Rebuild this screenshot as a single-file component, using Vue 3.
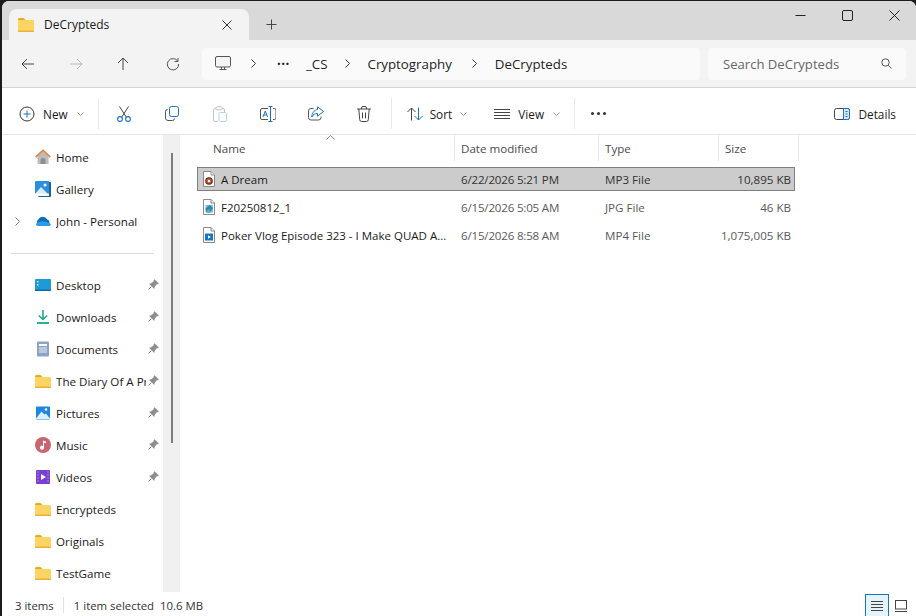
<script setup>
const navTop = [
  { label: 'Home', icon: 'home' },
  { label: 'Gallery', icon: 'gallery' },
  { label: 'John - Personal', icon: 'cloud', expand: true }
]

const navPinned = [
  { label: 'Desktop', icon: 'desktop', pin: true },
  { label: 'Downloads', icon: 'downloads', pin: true },
  { label: 'Documents', icon: 'documents', pin: true },
  { label: 'The Diary Of A Programmer', icon: 'folder', pin: true },
  { label: 'Pictures', icon: 'pictures', pin: true },
  { label: 'Music', icon: 'music', pin: true },
  { label: 'Videos', icon: 'videos', pin: true },
  { label: 'Encrypteds', icon: 'folder' },
  { label: 'Originals', icon: 'folder' },
  { label: 'TestGame', icon: 'folder' }
]

const files = [
  { name: 'A Dream', date: '6/22/2026 5:21 PM', type: 'MP3 File', size: '10,895 KB', kind: 'mp3', selected: true },
  { name: 'F20250812_1', date: '6/15/2026 5:05 AM', type: 'JPG File', size: '46 KB', kind: 'jpg' },
  { name: 'Poker Vlog Episode 323 - I Make QUAD A...', date: '6/15/2026 8:58 AM', type: 'MP4 File', size: '1,075,005 KB', kind: 'mp4' }
]
</script>

<template>
  <div class="window">
    <!-- tab strip -->
    <div class="titlebar">
      <div class="tab">
        <svg class="tab-folder" width="18" height="16" viewBox="0 0 18 16">
          <path d="M1 2.500C1 1.700 1.600 1 2.500 1h4L8.500 3H1z" fill="#e8a820" />
          <rect x="1" y="3" width="16" height="12" rx="1.200" fill="#fcd462" />
          <rect x="1" y="13.500" width="16" height="1.500" rx=".7" fill="#e9b13a" />
        </svg>
        <span class="tab-title">DeCrypteds</span>
        <svg class="tab-close" width="10" height="10" viewBox="0 0 10 10">
          <path d="M.5.5l9 9M9.500.5l-9 9" stroke="#333" stroke-width="1" fill="none" />
        </svg>
      </div>
      <svg class="tab-plus" width="11" height="11" viewBox="0 0 11 11">
        <path d="M5.500 .5v10M.5 5.500h10" stroke="#444" stroke-width="1" fill="none" />
      </svg>
      <div class="win-controls">
        <svg width="11" height="11" viewBox="0 0 11 11"><path d="M.5 5.500h10" stroke="#222" stroke-width="1" /></svg>
        <svg width="11" height="11" viewBox="0 0 11 11"><rect x=".5" y=".5" width="10" height="10" rx="1.500" fill="none" stroke="#222" /></svg>
        <svg width="11" height="11" viewBox="0 0 11 11"><path d="M.5.5l10 10M10.500.5l-10 10" stroke="#222" fill="none" /></svg>
      </div>
    </div>

    <!-- address row -->
    <div class="addressbar">
      <div class="nav-buttons">
        <svg width="14" height="12" viewBox="0 0 14 12"><path d="M13 6H1M6 1L1 6l5 5" stroke="#444" fill="none" /></svg>
        <svg width="14" height="12" viewBox="0 0 14 12"><path d="M1 6h12M8 1l5 5-5 5" stroke="#b8b8b8" fill="none" /></svg>
        <svg width="12" height="14" viewBox="0 0 12 14"><path d="M6 13V1M1 6l5-5 5 5" stroke="#444" fill="none" /></svg>
        <svg class="refresh" width="14" height="14" viewBox="0 0 14 14"><path d="M11.800 4.200A5.700 5.700 0 1 0 12.700 7M12 1v3.500H8.500" stroke="#555" fill="none" /></svg>
      </div>
      <div class="breadcrumb">
        <svg class="pc" width="16" height="15" viewBox="0 0 16 15">
          <rect x=".5" y=".5" width="15" height="10.500" rx="1.500" fill="#f4f4f4" stroke="#555" />
          <path d="M4.500 13.500h7M6.500 11v2.500M9.500 11v2.500" stroke="#555" fill="none" />
        </svg>
        <svg class="crumb-chev" width="5" height="9" viewBox="0 0 5 9"><path d="M.5.5l4 4-4 4" stroke="#333" fill="none" /></svg>
        <span class="dots">···</span>
        <span class="crumb cs">_CS</span>
        <svg class="crumb-chev" width="5" height="9" viewBox="0 0 5 9"><path d="M.5.5l4 4-4 4" stroke="#333" fill="none" /></svg>
        <span class="crumb">Cryptography</span>
        <svg class="crumb-chev" width="5" height="9" viewBox="0 0 5 9"><path d="M.5.5l4 4-4 4" stroke="#333" fill="none" /></svg>
        <span class="crumb">DeCrypteds</span>
      </div>
      <div class="search">
        <span>Search DeCrypteds</span>
        <svg width="11" height="11" viewBox="0 0 11 11"><circle cx="4.500" cy="4.500" r="3.700" fill="none" stroke="#555" /><path d="M7.300 7.300l3.200 3.200" stroke="#555" /></svg>
      </div>
    </div>

    <!-- command bar -->
    <div class="toolbar">
      <div class="tool-text new">
        <svg width="16" height="16" viewBox="0 0 16 16"><circle cx="8" cy="8" r="7" fill="none" stroke="#333" /><path d="M8 4.500v7M4.500 8h7" stroke="#1a73c2" fill="none" /></svg>
        <span>New</span>
        <svg class="caret" width="7" height="4" viewBox="0 0 7 4"><path d="M.5.5l3 3 3-3" stroke="#999" fill="none" /></svg>
      </div>
      <i class="tool-sep"></i>
      <div class="tool-icons">
        <svg width="14" height="16" viewBox="0 0 14 16"><path d="M2.500 .5l6.700 10.500M11.500 .5L4.800 11" stroke="#444" fill="none" /><circle cx="3" cy="13" r="2.400" fill="none" stroke="#1a73c2" stroke-width="1.100" /><circle cx="11" cy="13" r="2.400" fill="none" stroke="#1a73c2" stroke-width="1.100" /></svg>
        <svg width="14" height="15" viewBox="0 0 14 15"><rect x="4.500" y=".5" width="9" height="10" rx="2" fill="none" stroke="#1a73c2" /><path d="M2.500 3.500A2 2 0 0 0 .5 5.500v6.500A2.500 2.500 0 0 0 3 14.500h4.500a2 2 0 0 0 2-2" stroke="#555" fill="none" /></svg>
        <svg width="14" height="16" viewBox="0 0 14 16"><path d="M3 2.500H2A1.500 1.500 0 0 0 .5 4v10A1.500 1.500 0 0 0 2 15.500h3" stroke="#c4c4c4" fill="none" /><rect x="3" y=".8" width="6" height="3" rx="1" fill="none" stroke="#c4c4c4" /><path d="M9 2.500h1A1.500 1.500 0 0 1 11.500 4v2" stroke="#c4c4c4" fill="none" /><rect x="6" y="6.500" width="7.500" height="9" rx="1.200" fill="none" stroke="#b5d3ec" /></svg>
        <svg width="16" height="16" viewBox="0 0 16 16"><path d="M8 2.500H2A1.500 1.500 0 0 0 .5 4v8A1.500 1.500 0 0 0 2 13.500h6M13 2.500h1.500A1.500 1.500 0 0 1 16 4v8a1.500 1.500 0 0 1-1.500 1.500H13" stroke="#555" fill="none" /><path d="M8.500 .5h4M10.500 .5v15M8.500 15.500h4" stroke="#1a73c2" fill="none" /><path d="M3 11l2.300-6 2.300 6M3.800 9h3" stroke="#1a73c2" fill="none" /></svg>
        <svg width="16" height="15" viewBox="0 0 16 15"><path d="M5.500 2.500H3A2.500 2.500 0 0 0 .5 5v6.500A2.500 2.500 0 0 0 3 14h7.500a2.500 2.500 0 0 0 2.500-2.500v-1" stroke="#555" fill="none" /><path d="M9.500.8l6 4.700-6 4.700V7.500C7 7.500 5 8.500 3.800 11 3.800 7.500 6 4 9.500 3.500z" stroke="#1a73c2" fill="none" stroke-linejoin="round" /></svg>
        <svg width="14" height="16" viewBox="0 0 14 16"><path d="M0 3h14M4.500 3V2a1.500 1.500 0 0 1 1.500-1.500h2A1.500 1.500 0 0 1 9.500 2v1M1.800 3l.9 10.500a2 2 0 0 0 2 2h4.600a2 2 0 0 0 2-2L12.200 3M5.500 6.500v6M8.500 6.500v6" stroke="#444" fill="none" /></svg>
      </div>
      <i class="tool-sep sep2"></i>
      <div class="tool-text sort">
        <svg width="16" height="14" viewBox="0 0 16 14"><path d="M4.500 13.500V1M.5 5l4-4 4 4" stroke="#444" fill="none" /><path d="M11.500 .5V13M7.500 9l4 4 4-4" stroke="#1a73c2" fill="none" /></svg>
        <span>Sort</span>
        <svg class="caret" width="7" height="4" viewBox="0 0 7 4"><path d="M.5.5l3 3 3-3" stroke="#999" fill="none" /></svg>
      </div>
      <div class="tool-text view">
        <svg width="16" height="10" viewBox="0 0 16 10"><path d="M0 .5h16M0 3.500h16M0 6.500h16M0 9.500h16" stroke="#444" fill="none" /></svg>
        <span>View</span>
        <svg class="caret" width="7" height="4" viewBox="0 0 7 4"><path d="M.5.5l3 3 3-3" stroke="#999" fill="none" /></svg>
      </div>
      <i class="tool-sep"></i>
      <div class="more"><b></b><b></b><b></b></div>
      <div class="tool-text details">
        <svg width="16" height="12" viewBox="0 0 16 12"><rect x=".5" y=".5" width="15" height="11" rx="2" fill="none" stroke="#444" /><path d="M9.500 .5h4a2 2 0 0 1 2 2v7a2 2 0 0 1-2 2h-4z" fill="#d6e8f7" stroke="#1a73c2" /><path d="M11.500 3.500h2M11.500 6h2M11.500 8.500h2" stroke="#1a73c2" /></svg>
        <span>Details</span>
      </div>
    </div>

    <div class="main">
      <aside class="sidebar">
        <div class="nav-list">
          <div v-for="item in navTop" :key="item.label" class="nav-item">
            <svg v-if="item.expand" class="nav-chev" width="5" height="9" viewBox="0 0 5 9"><path d="M.5.5l4 4-4 4" stroke="#777" fill="none" /></svg>
            <svg class="nav-icon" width="16" height="16" viewBox="0 0 16 16">
              <template v-if="item.icon === 'home'">
                <path d="M2.500 7.500L8 2.500l5.500 5V15h-11z" fill="#bdbdbd" />
                <path d="M5.500 15v-3.500a2.500 2.500 0 0 1 5 0V15z" fill="#8f8f8f" />
                <path d="M.7 8.200L8 1.300l7.300 6.900" stroke="#dc8540" stroke-width="1.700" fill="none" />
              </template>
              <template v-else-if="item.icon === 'gallery'">
                <rect x="3" y="1" width="13" height="15" rx="1" fill="#1b5f9e" />
                <rect x="0" y="0" width="14" height="15" rx="1" fill="#2b8fe0" />
                <circle cx="10" cy="4" r="1.500" fill="#fff" />
                <path d="M0 13L6 6l7 7z" fill="#d9ecfb" />
                <rect x="0" y="12.500" width="14" height="2.500" fill="#fff" />
              </template>
              <template v-else>
                <path d="M4 12A3.200 3.200 0 0 1 3.200 6.500 5 5 0 0 1 12.200 6.500 3 3 0 0 1 13 12z" fill="#0f6cbd" />
                <path d="M1 11c3-3.500 9-4 14.800 0 .2 1.300-.8 2-1.800 2H3c-1.200 0-2-.8-2-2z" fill="#2d9ae6" />
              </template>
            </svg>
            <span class="nav-label">{{ item.label }}</span>
          </div>
          <div class="nav-divider"><i></i></div>
          <div v-for="item in navPinned" :key="item.label" class="nav-item">
            <svg class="nav-icon" width="16" height="16" viewBox="0 0 16 16">
              <template v-if="item.icon === 'folder'">
                <path d="M0 3.500C0 2.700.6 2 1.500 2h4L7.500 4H0z" fill="#e8a820" />
                <rect x="0" y="4" width="16" height="11" rx="1" fill="#fcd462" />
                <rect x="0" y="13.500" width="16" height="1.500" rx=".7" fill="#e9b13a" />
              </template>
              <template v-else-if="item.icon === 'desktop'">
                <rect x="0" y="2" width="16" height="12" rx="1" fill="#1e9ad6" />
                <rect x="0" y="12.500" width="16" height="1.500" fill="#0f6cad" />
                <rect x="2" y="4" width="1.500" height="1.500" fill="#cdeffc" />
                <rect x="2" y="7" width="1.500" height="1.500" fill="#cdeffc" />
              </template>
              <template v-else-if="item.icon === 'downloads'">
                <path d="M8 1v9M3.800 6.500L8 10.500l4.200-4" stroke="#17a589" stroke-width="1.500" fill="none" />
                <path d="M2 14h12" stroke="#17a589" stroke-width="1.800" />
              </template>
              <template v-else-if="item.icon === 'documents'">
                <rect x="2" y="0.500" width="12" height="15" rx="1" fill="#8ba3c4" />
                <rect x="4" y="3" width="8" height="2" fill="#fff" />
                <path d="M4 7h8M4 9h8M4 11h8" stroke="#e6edf6" />
              </template>
              <template v-else-if="item.icon === 'pictures'">
                <rect x="1" y="1.500" width="14" height="13" rx="1" fill="#1c86e0" />
                <circle cx="11" cy="4.500" r="1.300" fill="#fff" />
                <path d="M1 13.500L6.500 6.500l3 3 1.500-1 4 5v.5H1z" fill="#dff0fc" />
              </template>
              <template v-else-if="item.icon === 'music'">
                <circle cx="8" cy="8" r="8" fill="#c9656f" />
                <path d="M8 3.500l3 1v1.800l-2-.6v5a2 2 0 1 1-1-1.700z" fill="#fff" />
              </template>
              <template v-else>
                <rect x="1" y="1" width="14" height="14" rx="1" fill="#7a3fd0" />
                <path d="M6 5l5 3-5 3z" fill="#fff" />
                <path d="M2.500 3h1M2.500 6h1M2.500 9h1M2.500 12h1M12.500 3h1M12.500 6h1M12.500 9h1M12.500 12h1" stroke="#d9c6f5" />
              </template>
            </svg>
            <span class="nav-label">{{ item.label }}</span>
            <svg v-if="item.pin" class="pin" width="11" height="11" viewBox="0 0 11 11">
              <path d="M6.500 .2l4.300 4.300-1 .8-1 0L6.700 7.700 6.300 10 1 4.700l2.300-.4 2.400-2.100 0-1z" fill="#8c8c8c" />
              <path d="M3.200 7.800L.5 10.500" stroke="#8c8c8c" />
            </svg>
          </div>
        </div>
        <div class="side-scroll"><i></i></div>
      </aside>

      <section class="content">
        <div class="list-head">
          <div class="col-name">Name<svg class="sort-arrow" width="9" height="5" viewBox="0 0 9 5"><path d="M.5 4.500l4-4 4 4" stroke="#888" fill="none" /></svg></div>
          <div class="col-date">Date modified</div>
          <div class="col-type">Type</div>
          <div class="col-size">Size</div>
        </div>
        <div class="rows">
          <div v-for="file in files" :key="file.name" :class="['row', { 'is-selected': file.selected }]">
            <div class="cell-name">
              <svg width="12" height="16" viewBox="0 0 12 16">
                <path d="M.5.5h7.500l3.500 3.500v11.500H.5z" fill="#fff" stroke="#8a8a8a" />
                <path d="M8 .5V4h3.500" fill="#eee" stroke="#8a8a8a" />
                <template v-if="file.kind === 'mp3'">
                  <circle cx="6" cy="10" r="3.800" fill="#4a2418" />
                  <circle cx="6" cy="10" r="2.800" fill="#c2542a" />
                  <circle cx="6" cy="10" r="1.300" fill="#fff" />
                </template>
                <template v-else-if="file.kind === 'jpg'">
                  <rect x="2.500" y="6" width="7.500" height="7.500" fill="#7cc0e6" />
                  <path d="M2.500 9.500l4-3.500 3.500 3-3 4.500H3.500z" fill="#2f86b4" />
                  <path d="M3.500 12l2.500-2 2 3.500h-4z" fill="#5fb79a" />
                </template>
                <template v-else>
                  <rect x="2" y="6.500" width="8" height="7" rx=".5" fill="#1577c2" />
                  <path d="M5 8.200l2.800 1.800L5 11.800z" fill="#fff" />
                </template>
              </svg>
              <span>{{ file.name }}</span>
            </div>
            <div class="cell-date">{{ file.date }}</div>
            <div class="cell-type">{{ file.type }}</div>
            <div class="cell-size">{{ file.size }}</div>
          </div>
        </div>
      </section>
    </div>

    <!-- status bar -->
    <div class="statusbar">
      <span class="count">3 items</span>
      <i></i>
      <span class="sel">1 item selected</span>
      <span class="mb">10.6 MB</span>
      <div class="view-switch">
        <div class="vs-btn active">
          <svg width="12" height="10" viewBox="0 0 12 10"><path d="M0 .5h12M0 3.500h12M0 6.500h12M0 9.500h12" stroke="#444" fill="none" /></svg>
        </div>
        <div class="vs-btn">
          <svg width="12" height="12" viewBox="0 0 12 12"><rect x=".5" y=".5" width="11" height="8.500" fill="none" stroke="#444" /><path d="M0 11.500h12" stroke="#444" /></svg>
        </div>
      </div>
    </div>
  </div>
</template>

<style>
html, body {
  margin: 0;
  background: #1c1c1c;
}
</style>

<style scoped>
.window {
  width: 914px;
  height: 615px;
  margin: 1px 0 0 2px;
  display: flex;
  flex-direction: column;
  overflow: hidden;
  background: #fff;
  border-radius: 7px 7px 0 0;
  font-family: "Open Sans", "Noto Sans", sans-serif;
  font-size: 11.600px;
  color: #1a1a1a;
}

/* ---- tabs ---- */
.titlebar {
  height: 39px;
  flex: none;
  display: flex;
  align-items: flex-start;
  background: #d9d9d9;
}
.tab {
  width: 240px;
  height: 31px;
  margin: 8px 0 0 7px;
  display: flex;
  align-items: center;
  padding: 0 0 0 8px;
  box-sizing: border-box;
  background: #f3f3f3;
  border-radius: 8px 8px 0 0;
}
.tab-title {
  margin-left: 9px;
  font-size: 12px;
  font-weight: 500;
}
.tab-close {
  margin-left: auto;
  margin-right: 17px;
}
.tab-plus {
  margin: 18px 0 0 17px;
}
.win-controls {
  margin: 9px 0 0 auto;
  padding-right: 16px;
  display: flex;
  gap: 36px;
}

/* ---- address ---- */
.addressbar {
  height: 48px;
  flex: none;
  display: flex;
  align-items: center;
  gap: 8px;
  background: #f3f3f3;
  border-bottom: 1px solid #d4d4d4;
  box-sizing: border-box;
}
.nav-buttons {
  width: 192px;
  padding-left: 19px;
  box-sizing: border-box;
  display: flex;
  align-items: center;
  gap: 34px;
}
.refresh {
  margin-left: 3px;
}
.breadcrumb {
  width: 498px;
  height: 32px;
  display: flex;
  align-items: center;
  background: #fafafa;
  border-radius: 4px;
  font-size: 13.300px;
  color: #1f1f1f;
}
.pc {
  margin-left: 13px;
}
.crumb-chev {
  margin: 0 18px 0 20px;
}
.dots {
  font-weight: 700;
  letter-spacing: .5px;
  width: 16px;
  margin-left: 3px;
}
.cs {
  margin-left: 13px;
  margin-right: -3px;
}
.search {
  width: 198px;
  height: 32px;
  display: flex;
  align-items: center;
  justify-content: space-between;
  padding: 0 14px 0 15px;
  box-sizing: border-box;
  background: #fafafa;
  border-radius: 4px;
  font-size: 13.100px;
  color: #666;
}

/* ---- toolbar ---- */
.toolbar {
  height: 47px;
  flex: none;
  display: flex;
  align-items: center;
  padding-top: 5px;
  background: #fff;
  border-bottom: 1px solid #e6e6e6;
  box-sizing: border-box;
  font-size: 11.800px;
}
.tool-text {
  display: flex;
  align-items: center;
}
.new {
  margin-left: 17px;
  gap: 8px;
}
.caret {
  margin-left: 1px;
}
.tool-sep {
  width: 1px;
  height: 31px;
  margin-left: 14px;
  background: #e8e8e8;
}
.tool-icons {
  display: grid;
  grid-template-columns: repeat(6, 48px);
  justify-items: center;
  align-items: center;
  margin-left: 1px;
}
.sep2 {
  margin-left: 3px;
}
.sort {
  margin-left: 15px;
  gap: 7px;
}
.view {
  margin-left: 27px;
  gap: 8px;
}
.more {
  margin-left: 16px;
  display: flex;
  gap: 3px;
}
.more b {
  width: 3px;
  height: 3px;
  border-radius: 50%;
  background: #333;
}
.details {
  margin-left: auto;
  margin-right: 20px;
  gap: 8px;
}

/* ---- main ---- */
.main {
  flex: 1;
  min-height: 0;
  display: flex;
}
.sidebar {
  width: 178px;
  flex: none;
  display: flex;
  overflow: hidden;
}
.nav-list {
  width: 161px;
  padding-top: 6px;
  box-sizing: border-box;
}
.nav-item {
  height: 32px;
  display: flex;
  align-items: center;
  position: relative;
  padding-left: 33px;
}
.nav-chev {
  position: absolute;
  left: 13px;
  top: 12px;
}
.nav-icon {
  flex: none;
}
.nav-label {
  margin-left: 5px;
  width: 90px;
  white-space: nowrap;
  overflow: hidden;
}
.pin {
  position: absolute;
  left: 146px;
  top: 10px;
}
.nav-divider {
  height: 32px;
  display: flex;
  align-items: center;
  padding-left: 9px;
}
.nav-divider i {
  width: 143px;
  height: 1px;
  background: #d9d9d9;
}
.side-scroll {
  width: 17px;
  background: #f0f0f0;
  display: flex;
  justify-content: center;
}
.side-scroll i {
  width: 2px;
  height: 290px;
  margin-top: 18px;
  background: #7d7d7d;
}
.content {
  flex: 1;
  min-width: 0;
  padding-left: 17px;
}
.list-head {
  height: 26px;
  display: grid;
  grid-template-columns: 258px 144px 120px 80px;
  color: #4c4c4c;
}
.list-head > div {
  display: flex;
  align-items: center;
  padding-left: 6px;
  border-right: 1px solid #e6e6e6;
  box-sizing: border-box;
  position: relative;
}
.list-head .col-name {
  padding-left: 16px;
}
.sort-arrow {
  position: absolute;
  left: 129px;
  top: 0;
}
.rows {
  margin-top: 6px;
  width: 598px;
  display: flex;
  flex-direction: column;
  gap: 4px;
}
.row {
  height: 24px;
  display: grid;
  grid-template-columns: 257px 144px 120px 1fr;
  align-items: center;
  box-sizing: border-box;
  color: #5a5a5a;
  border: 1px solid transparent;
  white-space: nowrap;
}
.row.is-selected {
  background: #cccccc;
  border-color: #7f7f7f;
  color: #333;
}
.cell-name {
  display: flex;
  align-items: center;
  gap: 6px;
  padding-left: 5px;
  font-size: 11.500px;
  color: #1a1a1a;
}
.cell-date, .cell-type {
  padding-left: 6px;
}
.cell-date {
  letter-spacing: -.2px;
}
.cell-size {
  text-align: right;
  padding-right: 3px;
}

/* ---- status ---- */
.statusbar {
  height: 24px;
  flex: none;
  display: flex;
  align-items: center;
  padding-top: 2px;
  box-sizing: border-box;
  color: #333;
  font-size: 11.400px;
}
.count {
  margin-left: 13px;
}
.statusbar > i {
  width: 1px;
  height: 16px;
  background: #e2e2e2;
  margin: 0 10px 0 9px;
}
.mb {
  margin-left: 6px;
}
.view-switch {
  margin-left: auto;
  margin-right: 3px;
  display: flex;
  align-self: flex-end;
}
.vs-btn {
  width: 24px;
  height: 22px;
  display: flex;
  align-items: center;
  justify-content: center;
  box-sizing: border-box;
  border: 1px solid transparent;
  border-bottom: 0;
}
.vs-btn.active {
  background: #e5f3fb;
  border-color: #1a73b8;
}
</style>
